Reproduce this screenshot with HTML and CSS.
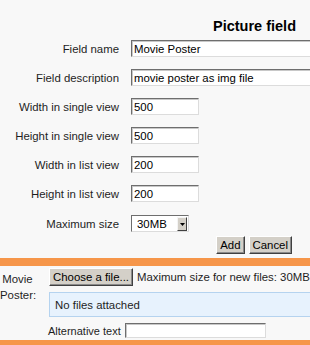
FILE: index.html
```html
<!DOCTYPE html>
<html lang="en">
<head>
    <meta charset="UTF-8">
    <title>Picture field</title>
    <link rel="stylesheet" href="styles.css">
</head>
<body>
    <div class="settings">
        <h2 class="title">Picture field</h2>

        <div class="row">
            <label class="label">Field name</label>
            <input class="text-input wide" type="text" value="Movie Poster">
        </div>
        <div class="row">
            <label class="label">Field description</label>
            <input class="text-input wide" type="text" value="movie poster as img file">
        </div>
        <div class="row">
            <label class="label">Width in single view</label>
            <input class="text-input short" type="text" value="500">
        </div>
        <div class="row">
            <label class="label">Height in single view</label>
            <input class="text-input short" type="text" value="500">
        </div>
        <div class="row">
            <label class="label">Width in list view</label>
            <input class="text-input short" type="text" value="200">
        </div>
        <div class="row">
            <label class="label">Height in list view</label>
            <input class="text-input short" type="text" value="200">
        </div>
        <div class="row row-select">
            <label class="label">Maximum size</label>
            <div class="select">
                <span class="select-value">30MB</span>
                <span class="select-arrow">
                    <svg width="5" height="3" viewBox="0 0 5 3"><path d="M0 0h5L2.5 3z" fill="#000"/></svg>
                </span>
            </div>
        </div>

        <div class="actions">
            <button class="btn">Add</button>
            <button class="btn">Cancel</button>
        </div>
    </div>

    <div class="filepicker">
        <div class="fp-label">Movie<br>Poster:</div>
        <div class="fp-body">
            <div class="fp-top">
                <button class="btn btn-choose">Choose a file...</button>
                <span class="fp-max">Maximum size for new files: 30MB</span>
            </div>
            <div class="fp-files">No files attached</div>
            <div class="fp-alt">
                <span class="alt-label">Alternative text</span>
                <input class="text-input alt-input" type="text" value="">
            </div>
        </div>
    </div>
</body>
</html>
```

FILE: styles.css
```css
/* General */
html, body {
    overflow: hidden;
}

body {
    margin: 0;
    background-color: #f8f8f8;
    font-family: 'Liberation Sans', Arial, sans-serif;
    font-size: 11.4px;
    color: #1e1e1e;
}

/* Settings form */
.settings {
    padding-top: 18px;
}

.title {
    margin: 0 0 5px 0;
    padding-right: 14px;
    text-align: right;
    font-size: 14.5px;
    line-height: 17px;
    font-weight: bold;
    color: #000;
}

.row {
    display: flex;
    align-items: center;
    gap: 12px;
    margin-bottom: 12px;
}

.row-select {
    margin-top: 13px;
    margin-bottom: 4px;
}

.label {
    width: 119px;
    flex-shrink: 0;
    text-align: right;
}

.text-input {
    box-sizing: border-box;
    height: 17px;
    margin: 0;
    padding: 0 2px;
    font-family: inherit;
    font-size: 11.4px;
    color: #000;
    background: #fff;
    border: 1px solid #dcdcdc;
    border-top-color: #6e6e6e;
    border-left-color: #6e6e6e;
    box-shadow: inset 1px 1px 0 #c8c8c8;
    outline: none;
}

.wide {
    width: 200px;
    flex-shrink: 0;
}

.short {
    width: 68px;
}

/* Select box */
.select {
    box-sizing: border-box;
    display: flex;
    align-items: center;
    justify-content: space-between;
    width: 58px;
    height: 17px;
    padding: 0 1px 0 5px;
    background: #fff;
    border: 1px solid #dcdcdc;
    border-top-color: #6e6e6e;
    border-left-color: #6e6e6e;
    color: #000;
}

.select-arrow {
    box-sizing: border-box;
    display: flex;
    align-items: center;
    justify-content: center;
    width: 10px;
    height: 14px;
    padding-top: 2px;
    background: #d4d0c8;
    border: 1px solid;
    border-color: #f4f4f4 #404040 #404040 #f4f4f4;
}

/* Buttons */
.actions {
    display: flex;
    justify-content: flex-end;
    gap: 4px;
    padding-right: 18px;
}

.btn {
    box-sizing: border-box;
    height: 18px;
    margin: 0;
    padding: 0 3px;
    font-family: inherit;
    font-size: 11.4px;
    color: #000;
    background: #d4d0c8;
    border: 1px solid;
    border-color: #fff #404040 #404040 #fff;
    box-shadow: inset -1px -1px 0 #8a8a8a;
    border-radius: 0;
}

/* File picker */
.filepicker {
    display: flex;
    margin-top: 4px;
    padding: 2px 0;
    border-top: 8px solid #f6964a;
    border-bottom: 8px solid #f6964a;
}

.fp-label {
    width: 35px;
    flex-shrink: 0;
    padding-top: 3px;
    text-align: center;
    line-height: 16px;
}

.fp-body {
    flex: 1;
    margin-left: 14px;
    min-width: 0;
}

.fp-top {
    display: flex;
    align-items: center;
    gap: 4px;
    white-space: nowrap;
}

.btn-choose {
    width: 84px;
    padding: 0 2px;
}

.fp-files {
    box-sizing: border-box;
    height: 25px;
    margin-top: 6px;
    margin-right: -20px;
    padding-left: 5px;
    display: flex;
    align-items: center;
    background: #e7f2fd;
    border: 1px solid #b5d3ef;
}

.fp-alt {
    display: flex;
    align-items: center;
    gap: 4px;
    margin-top: 6px;
    margin-left: -1px;
}

.alt-label {
    font-size: 11px;
}

.alt-input {
    width: 141px;
    height: 15px;
}
```
